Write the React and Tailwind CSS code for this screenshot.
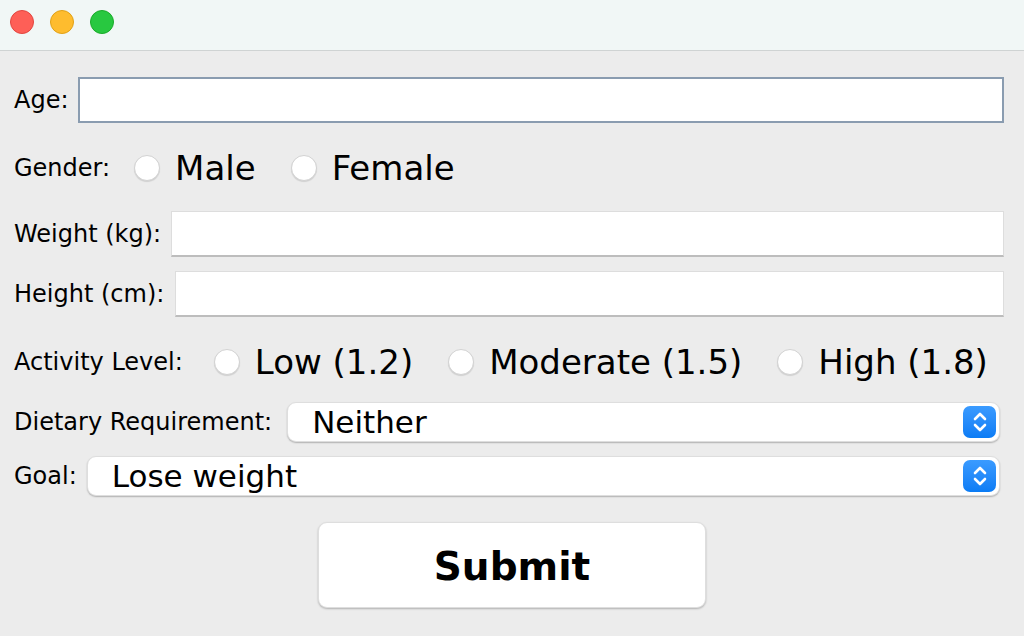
import { useState } from "react";

const font = { fontFamily: '"DejaVu Sans", sans-serif' };

function Radio({ label, checked, onChange }) {
  return (
    <label className="flex items-center gap-[15px] cursor-pointer" onClick={onChange}>
      <span className="w-[26px] h-[26px] rounded-full bg-white border border-[#d2d2d2] shadow-[0_1px_1px_rgba(0,0,0,0.12)] flex items-center justify-center">
        {checked ? <span className="w-[10px] h-[10px] rounded-full bg-[#1a82fb]" /> : null}
      </span>
      <span className="text-[34px] leading-none text-black">{label}</span>
    </label>
  );
}

function Stepper() {
  return (
    <span className="w-[33px] h-[32px] rounded-[7px] bg-gradient-to-b from-[#3a9bff] to-[#0a7cf5] flex items-center justify-center">
      <svg width="16" height="22" viewBox="0 0 16 22" fill="none" stroke="white" strokeWidth="2.6" strokeLinecap="round" strokeLinejoin="round">
        <path d="M3 8 L8 3 L13 8" />
        <path d="M3 14 L8 19 L13 14" />
      </svg>
    </span>
  );
}

function Select({ value }) {
  return (
    <div className="flex-1 h-[40px] rounded-[9px] bg-white border border-[#dedede] shadow-[0_1px_1.5px_rgba(0,0,0,0.25)] flex items-center justify-between pl-[24px] pr-[3px]">
      <span className="text-[31px] leading-none text-black">{value}</span>
      <Stepper />
    </div>
  );
}

export default function App() {
  const [gender, setGender] = useState("");
  const [activity, setActivity] = useState("");

  return (
    <div className="w-[1024px] h-[636px] bg-[#ececec] flex flex-col overflow-hidden" style={font}>
      <div className="h-[51px] shrink-0 bg-[#f1f7f6] border-b border-[#cfd3d3] flex items-start gap-[16px] pl-[10px] pt-[10px]">
        <span className="w-[24px] h-[24px] rounded-full bg-[#fe5f57] border border-[#e2463f]" />
        <span className="w-[24px] h-[24px] rounded-full bg-[#febc2e] border border-[#e1a116]" />
        <span className="w-[24px] h-[24px] rounded-full bg-[#28c840] border border-[#1aab29]" />
      </div>

      <div className="flex flex-col pl-[14px] pr-[20px] text-black">
        <div className="mt-[26px] h-[46px] flex items-center gap-[9px]">
          <span className="text-[24px]">Age:</span>
          <input className="flex-1 h-[46px] bg-white border-2 border-[#8a9cb0] outline-none px-2 text-[24px]" />
        </div>

        <div className="mt-[25px] h-[40px] flex items-center">
          <span className="text-[24px] mr-[24px]">Gender:</span>
          <div className="flex items-center gap-[35px]">
            <Radio label="Male" checked={gender === "m"} onChange={() => setGender("m")} />
            <Radio label="Female" checked={gender === "f"} onChange={() => setGender("f")} />
          </div>
        </div>

        <div className="mt-[23px] h-[46px] flex items-center gap-[10px]">
          <span className="text-[24px]">Weight (kg):</span>
          <input className="flex-1 h-[46px] bg-white border border-[#dddddd] border-b-2 border-b-[#bdbdbd] outline-none px-2 text-[24px]" />
        </div>

        <div className="mt-[14px] h-[46px] flex items-center gap-[11px]">
          <span className="text-[24px]">Height (cm):</span>
          <input className="flex-1 h-[46px] bg-white border border-[#dddddd] border-b-2 border-b-[#bdbdbd] outline-none px-2 text-[24px]" />
        </div>

        <div className="mt-[25px] h-[40px] flex items-center">
          <span className="text-[24px] mr-[31px]">Activity Level:</span>
          <div className="flex items-center gap-[35px]">
            <Radio label="Low (1.2)" checked={activity === "low"} onChange={() => setActivity("low")} />
            <Radio label="Moderate (1.5)" checked={activity === "mod"} onChange={() => setActivity("mod")} />
            <Radio label="High (1.8)" checked={activity === "high"} onChange={() => setActivity("high")} />
          </div>
        </div>

        <div className="mt-[20px] h-[40px] flex items-center gap-[15px] pr-[4px]">
          <span className="text-[24px]">Dietary Requirement:</span>
          <Select value="Neither" />
        </div>

        <div className="mt-[14px] h-[40px] flex items-center gap-[10px] pr-[4px]">
          <span className="text-[24px]">Goal:</span>
          <Select value="Lose weight" />
        </div>
      </div>

      <div className="mt-[26px] flex justify-center">
        <button className="w-[388px] h-[86px] rounded-[9px] bg-white border border-[#dedede] shadow-[0_1px_2px_rgba(0,0,0,0.25)] text-[39px] font-bold text-black pt-[5px]">
          Submit
        </button>
      </div>
    </div>
  );
}
